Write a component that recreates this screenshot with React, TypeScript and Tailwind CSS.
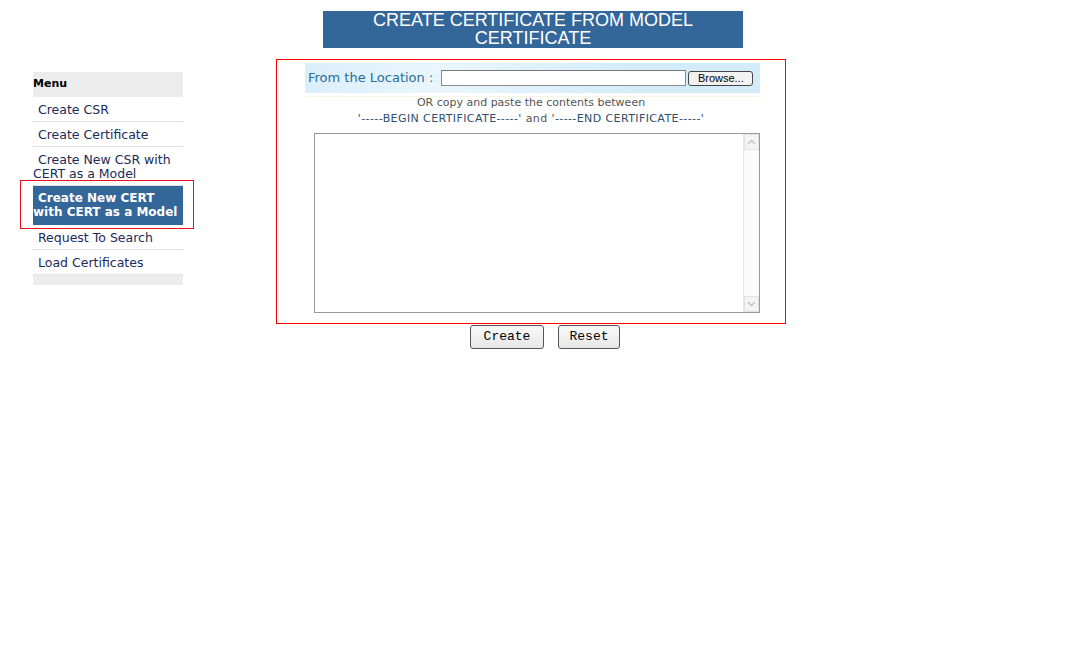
import React from "react";

const menuItems = [
  { label: "Create CSR" },
  { label: "Create Certificate" },
  { label: "Create New CSR with", second: "CERT as a Model" },
  { label: "Create New CERT", second: "with CERT as a Model", active: true },
  { label: "Request To Search" },
  { label: "Load Certificates" },
];

function Sidebar() {
  return (
    <div className="relative mt-[13px] ml-[33px] w-[150px] shrink-0">
      <div className="flex h-[25px] items-center bg-[#ececec] text-[11px] font-bold text-black">
        Menu
      </div>
      {menuItems.map((item) =>
        item.active ? (
          <div
            key={item.label}
            className="flex h-[39px] items-center bg-[#336699] pb-[1px] text-[12px] leading-[14px] font-bold whitespace-nowrap text-white"
          >
            <span className="block indent-[5px]">
              {item.label}
              <br />
              {item.second}
            </span>
          </div>
        ) : (
          <div
            key={item.label}
            className={`flex items-center border-b border-[#e2e2e2] text-[12.5px] leading-[14px] text-[#1c2a58] ${
              item.second ? "h-[39px] pt-[2px]" : "h-[25px] pt-[1px]"
            }`}
          >
            <span className="block indent-[5px]">
              {item.label}
              {item.second && (
                <>
                  <br />
                  {item.second}
                </>
              )}
            </span>
          </div>
        )
      )}
      <div className="h-[10px] bg-[#ececec]" />
      {/* annotation frame around the current item */}
      <div className="pointer-events-none absolute top-[108px] -left-[13px] h-[49px] w-[174px] border border-[#e8101a]" />
    </div>
  );
}

function LocationBar() {
  return (
    <div className="ml-[28px] mt-[3px] flex h-[30px] w-[455px] items-center bg-[#d8eefb] bg-[radial-gradient(circle_at_30%_40%,#eaf6fd_0,#d4ecfa_60%)]">
      <span className="ml-[3px] text-[13px] text-[#2c6a99]">From the Location :</span>
      <div className="ml-[8px] h-[16px] w-[245px] border border-[#8a8a8a] border-t-[#777] bg-white" />
      <button className="ml-[2px] flex h-[15px] w-[65px] items-center justify-center rounded-[3px] border border-[#444] bg-[#f2f2f2] font-['Liberation_Sans',sans-serif] text-[11px] leading-none text-black">
        Browse...
      </button>
    </div>
  );
}

function Scrollbar() {
  return (
    <div className="flex h-full w-[16px] flex-col border-l border-[#e6e6e6] bg-[#fbfbfb]">
      <div className="flex h-[16px] items-center justify-center border border-[#e3e3e3] bg-[#f4f4f4]">
        <svg width="9" height="6" viewBox="0 0 9 6">
          <path d="M1 5 L4.5 1.5 L8 5" fill="none" stroke="#c4c4c4" strokeWidth="1.4" />
        </svg>
      </div>
      <div className="flex-1" />
      <div className="flex h-[16px] items-center justify-center border border-[#e3e3e3] bg-[#f4f4f4]">
        <svg width="9" height="6" viewBox="0 0 9 6">
          <path d="M1 1 L4.5 4.5 L8 1" fill="none" stroke="#c4c4c4" strokeWidth="1.4" />
        </svg>
      </div>
    </div>
  );
}

export default function App() {
  return (
    <div className="h-[648px] w-[1076px] bg-white font-['DejaVu_Sans',Verdana,sans-serif]">
      <div className="pl-[323px] pt-[11px]">
        <div className="flex h-[37px] w-[420px] flex-col items-center justify-center bg-[#336699] pb-[1px] text-center font-['Liberation_Sans',Arial,sans-serif] text-[18px] leading-[18px] text-white">
          <span>CREATE CERTIFICATE FROM MODEL</span>
          <span>CERTIFICATE</span>
        </div>
      </div>

      <div className="mt-[11px] flex items-start">
        <Sidebar />

        <div className="ml-[93px] flex w-[510px] flex-col">
          <div className="h-[265px] border border-[#ff0000]">
            <LocationBar />
            <div className="mt-[3px] ml-[28px] h-px w-[455px] bg-[#fbf4e4]" />
            <div className="-mt-[2px] text-center text-[11px] leading-[16px] text-[#555]">
              <div>OR copy and paste the contents between</div>
              <div className="tracking-[0.4px]">
                <span className="text-[#2f4e6c]">'-----BEGIN CERTIFICATE-----'</span> and{" "}
                <span className="text-[#2f4e6c]">'-----END CERTIFICATE-----'</span>
              </div>
            </div>
            <div className="ml-[37px] mt-[6px] flex h-[180px] w-[446px] border border-[#999] bg-white">
              <div className="flex-1" />
              <Scrollbar />
            </div>
          </div>

          <div className="mt-[1px] ml-[194px] flex gap-[14px] font-['Liberation_Mono','Courier_New',monospace] text-[13px] text-black">
            <button className="h-[24px] w-[74px] rounded-[3px] border border-[#555] bg-[linear-gradient(#fafafa,#e6e6e6)]">
              Create
            </button>
            <button className="h-[24px] w-[62px] rounded-[3px] border border-[#555] bg-[linear-gradient(#fafafa,#e6e6e6)]">
              Reset
            </button>
          </div>
        </div>
      </div>
    </div>
  );
}
